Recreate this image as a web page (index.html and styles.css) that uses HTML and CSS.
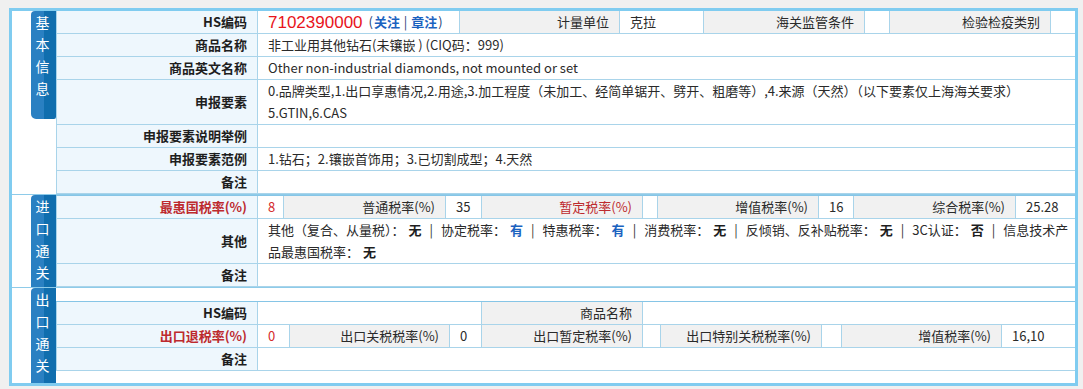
FILE: index.html
```html
<!DOCTYPE html>
<html lang="zh-CN">
<head>
<meta charset="utf-8">
<title>商品信息</title>
<link rel="stylesheet" href="styles.css">
</head>
<body>
<div class="panel">
  <section class="sec sec-basic">
    <div class="side"><div class="tab tab-short">基<br>本<br>信<br>息</div></div>
    <div class="grid">
      <div class="row">
        <div class="lbl">HS编码</div>
        <div class="val w202"><span class="hs">7102390000</span> <span class="links">(<a class="lk">关注</a> | <a class="lk">章注</a>)</span></div>
        <div class="key w160">计量单位</div>
        <div class="val w84">克拉</div>
        <div class="key w161">海关监管条件</div>
        <div class="val w25"></div>
        <div class="key w161">检验检疫类别</div>
        <div class="val grow"></div>
      </div>
      <div class="row">
        <div class="lbl">商品名称</div>
        <div class="val grow">非工业用其他钻石(未镶嵌 ) (CIQ码：999)</div>
      </div>
      <div class="row">
        <div class="lbl">商品英文名称</div>
        <div class="val grow">Other non-industrial diamonds, not mounted or set</div>
      </div>
      <div class="row">
        <div class="lbl">申报要素</div>
        <div class="val grow"><span class="line">0.品牌类型,1.出口享惠情况,2.用途,3.加工程度（未加工、经简单锯开、劈开、粗磨等）,4.来源（天然）（以下要素仅上海海关要求）</span><span class="line">5.GTIN,6.CAS</span></div>
      </div>
      <div class="row">
        <div class="lbl">申报要素说明举例</div>
        <div class="val grow"></div>
      </div>
      <div class="row">
        <div class="lbl">申报要素范例</div>
        <div class="val grow">1.钻石；2.镶嵌首饰用；3.已切割成型；4.天然</div>
      </div>
      <div class="row">
        <div class="lbl">备注</div>
        <div class="val grow"></div>
      </div>
    </div>
  </section>

  <section class="sec sec-import">
    <div class="side"><div class="tab tab-fill">进<br>口<br>通<br>关</div></div>
    <div class="grid grid-top">
      <div class="row">
        <div class="lbl red">最惠国税率(%)</div>
        <div class="val w26 num-red">8</div>
        <div class="key w162">普通税率(%)</div>
        <div class="val w36">35</div>
        <div class="key w161 red">暂定税率(%)</div>
        <div class="val w15"></div>
        <div class="key w161">增值税率(%)</div>
        <div class="val w35">16</div>
        <div class="key w162">综合税率(%)</div>
        <div class="val grow">25.28</div>
      </div>
      <div class="row">
        <div class="lbl">其他</div>
        <div class="val grow other"><span class="item">其他（复合、从量税）：<b class="no">无</b></span><span class="sep">|</span><span class="item">协定税率：<b class="yes">有</b></span><span class="sep">|</span><span class="item">特惠税率：<b class="yes">有</b></span><span class="sep">|</span><span class="item">消费税率：<b class="no">无</b></span><span class="sep">|</span><span class="item">反倾销、反补贴税率：<b class="no">无</b></span><span class="sep">|</span><span class="item">3C认证：<b class="no">否</b></span><span class="sep">|</span><span class="item">信息技术产</span><span class="item">品最惠国税率：<b class="no">无</b></span></div>
      </div>
      <div class="row">
        <div class="lbl">备注</div>
        <div class="val grow"></div>
      </div>
    </div>
  </section>

  <section class="sec sec-export">
    <div class="side"><div class="tab tab-fill">出<br>口<br>通<br>关</div></div>
    <div class="grid grid-top">
      <div class="row">
        <div class="lbl">HS编码</div>
        <div class="val w224"></div>
        <div class="key w161">商品名称</div>
        <div class="val grow"></div>
      </div>
      <div class="row">
        <div class="lbl red">出口退税率(%)</div>
        <div class="val w32 num-red">0</div>
        <div class="key w160">出口关税税率(%)</div>
        <div class="val w32">0</div>
        <div class="key w161">出口暂定税率(%)</div>
        <div class="val w18"></div>
        <div class="key w161">出口特别关税税率(%)</div>
        <div class="val w20"></div>
        <div class="key w160">增值税率(%)</div>
        <div class="val grow">16,10</div>
      </div>
      <div class="row">
        <div class="lbl">备注</div>
        <div class="val grow"></div>
      </div>
    </div>
  </section>
</div>
</body>
</html>
```

FILE: styles.css
```css
* { box-sizing: border-box; }

body {
  margin: 8px 5px 0 9px;
  background: #f0f0f0;
  font-family: "Noto Sans CJK SC", "Noto Sans", sans-serif;
  font-size: 13px;
  color: #222;
}

.panel {
  background: #fff;
  border: 3px solid #80ccf0;
  height: 378px;
}

.sec {
  display: flex;
  border-bottom: 1px solid #8ecbe9;
}
.sec-export {
  border-bottom: none;
  min-height: 95px;
  align-items: center;
}

.side {
  width: 44px;
  flex: none;
  padding-left: 19px;
  align-self: stretch;
  display: flex;
  flex-direction: column;
}

.tab {
  width: 25px;
  background: linear-gradient(to right, #2a80c2 0, #2a80c2 13px, #106eae 13px, #106eae 100%);
  color: #fff;
  font-size: 14px;
  line-height: 22px;
  text-align: center;
  padding-right: 2px;
  border-top-left-radius: 4px;
}
.tab-short {
  height: 108px;
  border-bottom-left-radius: 5px;
  border-bottom-right-radius: 2px;
}
.tab-fill {
  flex: 1;
}

.grid {
  flex: 1;
  min-width: 0;
}
.grid-top { border-top: 1px solid #86c5e6; }

.row {
  display: flex;
  border-bottom: 1px solid #a9d4ea;
  min-height: 23px;
}

.lbl, .key, .val {
  border-left: 1px solid #a9d4ea;
  line-height: 22px;
  flex: none;
}

.lbl {
  width: 201px;
  background: #eef7fd;
  font-weight: bold;
  display: flex;
  align-items: center;
  justify-content: flex-end;
  padding-right: 10px;
  color: #1e1e1e;
}

.key {
  background: #f1f1f1;
  display: flex;
  align-items: center;
  justify-content: flex-end;
  padding-right: 10px;
  color: #2a2a2a;
}

.val {
  padding: 0 4px 0 10px;
  color: #2a2a2a;
  white-space: nowrap;
}
.val.grow { flex: 1; white-space: normal; min-width: 0; }
.val .line { display: block; }

.red { color: #bd2a2e; }
.num-red { color: #d42a2a; }

.w15 { width: 15px; }
.w18 { width: 18px; }
.w20 { width: 20px; }
.w25 { width: 25px; }
.w26 { width: 26px; }
.w32 { width: 32px; }
.w35 { width: 35px; }
.w36 { width: 36px; }
.w84 { width: 84px; }
.w160 { width: 160px; }
.w161 { width: 161px; }
.w162 { width: 162px; }
.w202 { width: 202px; }
.w224 { width: 224px; }

.hs {
  font-family: "Liberation Sans", sans-serif;
  font-size: 17px;
  color: #e8141b;
  line-height: 1;
  vertical-align: -1px;
}
.links {
  font-size: 13px;
  color: #1c3f77;
  margin-left: 3px;
}
.lk {
  color: #1a62bf;
  font-weight: bold;
  margin: 0 1px;
}

.other .item { white-space: nowrap; }
.other b {
  font-weight: bold;
  margin-left: 4px;
}
.other .no { color: #1e1e1e; }
.other .yes { color: #1a62bf; }
.sep {
  margin: 0 8px;
  color: #333;
}
```
